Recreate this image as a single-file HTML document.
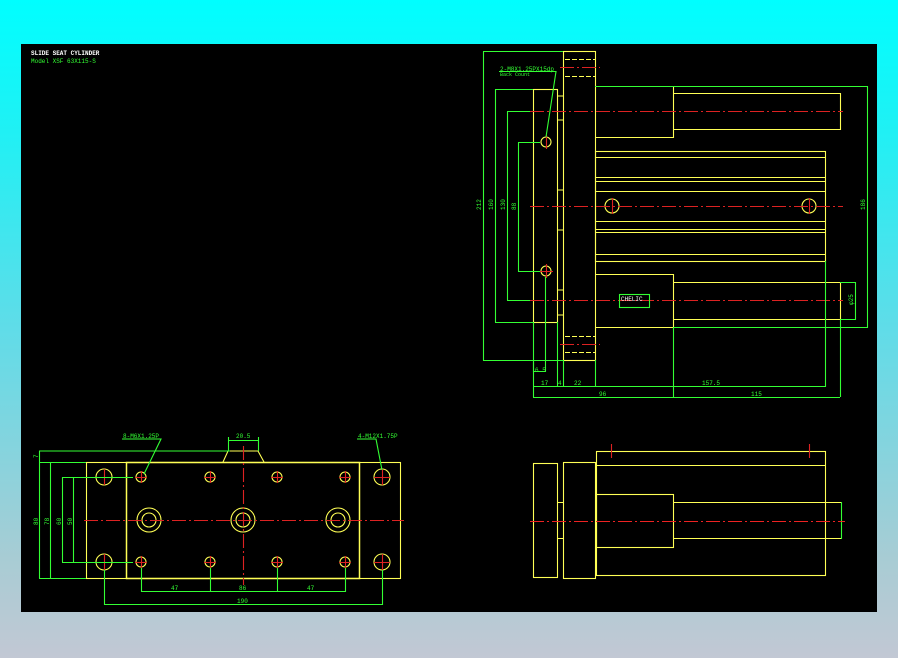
<!DOCTYPE html>
<html><head><meta charset="utf-8"><style>
html,body{margin:0;padding:0;width:898px;height:658px;overflow:hidden;background:linear-gradient(#00ffff 0%,#20f0f4 20%,#60dce8 50%,#a8ccd4 85%,#c2c8d4 100%);}
svg{position:absolute;left:0;top:0}
text{font-family:"Liberation Mono",monospace;}
</style></head><body>
<svg width="898" height="658" viewBox="0 0 898 658">
<rect x="21" y="44" width="856" height="568" fill="#000"/>
<text x="31" y="55" fill="#fff" font-size="6" font-weight="bold">SLIDE SEAT CYLINDER</text>
<text x="31" y="63" fill="#3f3" font-size="6">Model  XSF 63X115-S</text>

<g fill="none" stroke-width="1.1">
<g stroke="#ff5" >
<rect x="563.5" y="51.5" width="32" height="309"/>
<rect x="533.5" y="89.5" width="24" height="233"/>
<path d="M557 96H563M557 120H563M557 190H563M557 230H563M557 290H563M557 315H563"/>
<path d="M595.5 86.5H673.5V137.5H595.5M673.5 93.5H840.5V129.5H673.5"/>
<rect x="595.5" y="151.5" width="230" height="110"/>
<path d="M596 157.5H825M596 177.5H825M596 181.5H825M596 191.5H825M596 221.5H825M596 229.5H825M596 232.5H825M596 254.5H825"/>
<path d="M595.5 274.5H673.5V327.5H595.5M673.5 282.5H840.5V319.5H673.5"/>
<path d="M565 59.5H595M565 76.5H595M565 336.5H595M565 352.5H595" stroke-dasharray="5 2"/>
<circle cx="612" cy="206" r="7"/><circle cx="809" cy="206" r="7"/>
<circle cx="546" cy="142" r="5"/><circle cx="546" cy="271" r="5"/>
</g>
<g stroke="#d22" stroke-dasharray="14 3 2 3">
<path d="M530 111.5H843M530 206.5H843M530 300.5H843M560 67.5H600M560 344.5H600"/>
</g>
<g stroke="#d22">
<path d="M546.5 135V149M546.5 264V278M539 271.5H553M612.5 198V214M809.5 198V214"/>
</g>
<g stroke="#3f3">
<path d="M483.5 51.5V360.5M483 51.5H563M483 360.5H563"/>
<path d="M495.5 89.5V322.5M495 89.5H533M495 322.5H533"/>
<path d="M507.5 111.5V300.5M507 111.5H530M507 300.5H530"/>
<path d="M518.5 142.5V271.5M518 142.5H540M518 271.5H540"/>
<path d="M595 86.5H867.5V327.5H673M840 282.5H855.5V319.5H840"/>
<path d="M533.5 322V397M557.5 322V387M563.5 360V387M595.5 360V387M673.5 327V397M825.5 261V387M840.5 319V397"/>
<path d="M533 386.5H825M533 397.5H840"/>
<path d="M533.5 362.5V371.5H545.5V277"/>
<path d="M499 71.5H556L546 137"/>
<rect x="619.5" y="294.5" width="30" height="13"/>
</g>
<g fill="#3f3" font-size="6">
<text x="500" y="71">2-M8X1.25PX15dp</text>
<text x="500" y="76" font-size="5">Back Count</text>
<text x="535" y="372" font-size="6">6.5</text>
<text x="541" y="385">17</text><text x="558" y="385">4</text><text x="574" y="385">22</text>
<text x="702" y="385">157.5</text>
<text x="599" y="396">96</text><text x="751" y="396">115</text>
<text x="621" y="301" font-size="6" fill="#fff">CHELIC</text>
<text transform="translate(481,210) rotate(-90)">212</text>
<text transform="translate(493,210) rotate(-90)">160</text>
<text transform="translate(505,210) rotate(-90)">130</text>
<text transform="translate(516,210) rotate(-90)">88</text>
<text transform="translate(865,210) rotate(-90)">186</text>
<text transform="translate(853,305) rotate(-90)">φ25</text>
</g>

<g stroke="#ff5">
<rect x="86.5" y="462.5" width="314" height="116"/>
<rect x="126.5" y="462.5" width="233" height="116" stroke-width="1.5"/>
<path d="M223 462L228 451H258L264 462"/>
<circle cx="104" cy="477" r="8"/><circle cx="382" cy="477" r="8"/>
<circle cx="104" cy="562" r="8"/><circle cx="382" cy="562" r="8"/>
<circle cx="141" cy="477" r="5"/><circle cx="210" cy="477" r="5"/><circle cx="277" cy="477" r="5"/><circle cx="345" cy="477" r="5"/>
<circle cx="141" cy="562" r="5"/><circle cx="210" cy="562" r="5"/><circle cx="277" cy="562" r="5"/><circle cx="345" cy="562" r="5"/>
<circle cx="149" cy="520" r="12"/><circle cx="149" cy="520" r="7"/>
<circle cx="243" cy="520" r="12"/><circle cx="243" cy="520" r="7"/>
<circle cx="338" cy="520" r="12"/><circle cx="338" cy="520" r="7"/>
</g>
<g stroke="#d22" stroke-dasharray="14 3 2 3">
<path d="M84 520.5H404M243.5 446V585"/>
</g>
<g stroke="#d22">
<path d="M96 477.5H112M104.5 469V485M374 477.5H390M382.5 469V485M96 562.5H112M104.5 554V570M374 562.5H390M382.5 554V570"/>
<path d="M135 477.5H147M141.5 471V483M204 477.5H216M210.5 471V483M271 477.5H283M277.5 471V483M339 477.5H351M345.5 471V483"/>
<path d="M135 562.5H147M141.5 556V568M204 562.5H216M210.5 556V568M271 562.5H283M277.5 556V568M339 562.5H351M345.5 556V568"/>
</g>
<g stroke="#3f3">
<path d="M39.5 451V578M39 451H230M39 462.5H86"/>
<path d="M50.5 463V578M39 578.5H86"/>
<path d="M62.5 477V562M62 477.5H96M62 562.5H96"/>
<path d="M73.5 477V562M73 477.5H133M73 562.5H133"/>
<path d="M104.5 570V605M382.5 570V605M104 604.5H382"/>
<path d="M141.5 568V592M210.5 568V592M277.5 568V592M345.5 568V592M141 591.5H345"/>
<path d="M228.5 437V451M258.5 437V451M228 440.5H258"/>
<path d="M122 439H161L144 474M357 439H376L382 470"/>
</g>
<g fill="#3f3" font-size="6">
<text x="123" y="438">8-M6X1.25P</text>
<text x="358" y="438">4-M12X1.75P</text>
<text x="236" y="438">20.5</text>
<text x="171" y="590">47</text><text x="239" y="590">86</text><text x="307" y="590">47</text>
<text x="237" y="603">190</text>
<text transform="translate(38,458) rotate(-90)">7</text>
<text transform="translate(38,525) rotate(-90)">80</text>
<text transform="translate(49,525) rotate(-90)">78</text>
<text transform="translate(61,525) rotate(-90)">60</text>
<text transform="translate(72,525) rotate(-90)">50</text>
</g>

<g stroke="#ff5">
<rect x="533.5" y="463.5" width="24" height="114"/>
<rect x="563.5" y="462.5" width="32" height="116"/>
<path d="M557 502.5H563M557 538.5H563"/>
<rect x="596.5" y="451.5" width="229" height="124"/>
<path d="M596 465.5H825"/>
<rect x="596.5" y="494.5" width="77" height="53"/>
<path d="M673.5 502.5H841M673.5 538.5H841"/>
</g>
<path d="M841.5 502V539" stroke="#3f3"/>
<path d="M530 521.5H845" stroke="#e22" stroke-dasharray="14 3 2 3"/>
<path d="M611.5 444V458M809.5 444V458" stroke="#d22"/>
</g>
</svg>
</body></html>
